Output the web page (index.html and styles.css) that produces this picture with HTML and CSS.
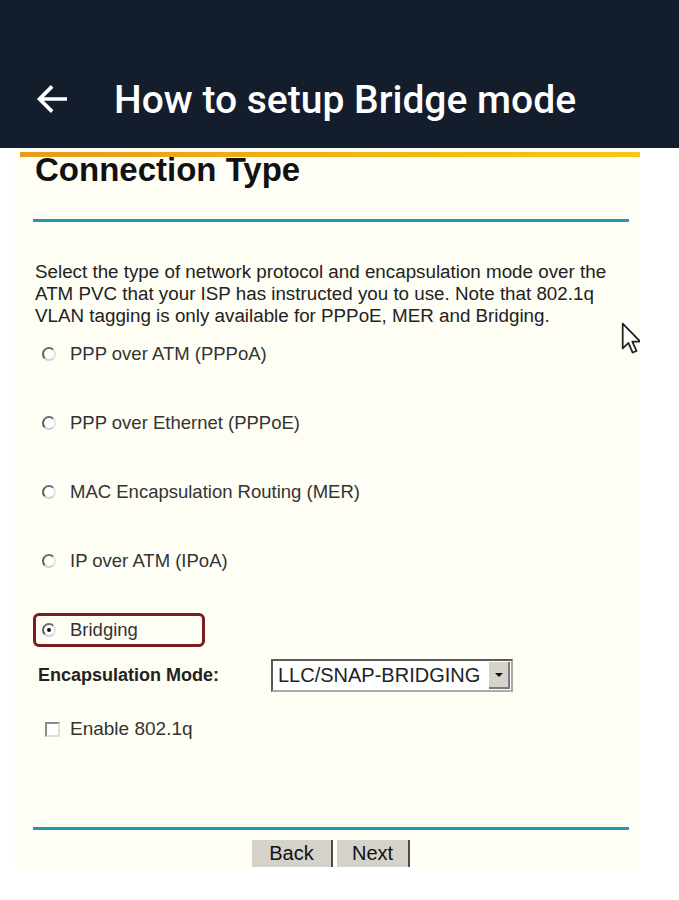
FILE: index.html
```html
<!DOCTYPE html>
<html lang="en">
<head>
    <meta charset="UTF-8">
    <meta name="viewport" content="width=device-width, initial-scale=1.0">
    <title>How to setup Bridge mode</title>
    <link rel="stylesheet" href="styles.css">
</head>
<body>
    <header class="appbar">
        <svg class="back-icon" viewBox="0 0 24 24" width="42" height="42">
            <path d="M20 12H4.5M11.5 4.8L4.3 12l7.2 7.2" fill="none" stroke="#fff" stroke-width="2.1"/>
        </svg>
        <h1 class="appbar-title">How to setup Bridge mode</h1>
    </header>

    <div class="shot">
        <div class="accent"></div>
        <h2 class="shot-title">Connection Type</h2>
        <div class="rule"></div>

        <p class="intro">Select the type of network protocol and encapsulation mode over the ATM PVC that your ISP has instructed you to use. Note that 802.1q VLAN tagging is only available for PPPoE, MER and Bridging.</p>

        <!-- Protocol choices -->
        <div class="options">
            <label class="option"><input type="radio" name="proto" class="radio"> PPP over ATM (PPPoA)</label>
            <label class="option"><input type="radio" name="proto" class="radio"> PPP over Ethernet (PPPoE)</label>
            <label class="option"><input type="radio" name="proto" class="radio"> MAC Encapsulation Routing (MER)</label>
            <label class="option"><input type="radio" name="proto" class="radio"> IP over ATM (IPoA)</label>
            <label class="option highlight"><input type="radio" name="proto" class="radio" checked> Bridging</label>
        </div>

        <div class="encap">
            <span class="encap-label">Encapsulation Mode:</span>
            <div class="select">
                <span class="select-value">LLC/SNAP-BRIDGING</span>
                <span class="select-btn"><span class="caret"></span></span>
            </div>
        </div>

        <label class="check-row"><input type="checkbox" class="checkbox"> Enable 802.1q</label>

        <div class="rule rule-bottom"></div>

        <div class="buttons">
            <button class="btn">Back</button>
            <button class="btn">Next</button>
        </div>

        <!-- mouse pointer captured in the screenshot -->
        <svg class="pointer" viewBox="0 0 13 20" width="21" height="32">
            <path d="M1 1v15.5l3.6-3.4 2.6 6 2.4-1-2.6-5.8h5z" fill="#fff" stroke="#222" stroke-width="1.1" stroke-linejoin="round"/>
        </svg>
    </div>
</body>
</html>
```

FILE: styles.css
```css
body {
    margin: 0;
    background: #fff;
    font-family: "Liberation Sans", Arial, sans-serif;
}

.appbar {
    height: 148px;
    background: #141d2c;
    display: flex;
    align-items: flex-end;
    padding: 0 0 25px 32px;
    box-sizing: border-box;
}

.back-icon {
    display: block;
    margin-bottom: 3px;
}

.appbar-title {
    margin: 0 0 0 40px;
    font-family: Roboto, "Noto Sans", sans-serif;
    font-weight: 500;
    font-size: 39px;
    line-height: 46px;
    color: #fff;
}

.shot {
    position: relative;
    width: 625px;
    height: 719px;
    margin-left: 15px;
    padding-left: 18px;
    box-sizing: border-box;
    background: #fefef5;
    overflow: hidden;
}

.accent {
    height: 5px;
    margin: 4px 0 0 -13px;
    width: 622px;
    background: linear-gradient(90deg, #e79a1e 0%, #f0b414 50%, #f6c812 100%);
}

.shot-title {
    margin: -1px 0 0 2px;
    font-size: 33px;
    line-height: 28px;
    color: #111;
}

.rule {
    height: 3px;
    width: 596px;
    margin-top: 35px;
    background: #2596b6;
}

.intro {
    margin: 39px 0 0 2px;
    width: 600px;
    font-size: 18.8px;
    line-height: 22px;
    color: #222;
}

.options {
    display: flex;
    flex-direction: column;
    gap: 35px;
    margin-top: 10px;
}

.option {
    display: flex;
    align-items: center;
    gap: 14px;
    width: 172px;
    height: 34px;
    padding-left: 6px;
    border: 3px solid transparent;
    border-radius: 6px;
    box-sizing: border-box;
    font-size: 18.5px;
    color: #333;
    white-space: nowrap;
}

.option.highlight {
    border-color: #7a1c1f;
}

.radio {
    appearance: none;
    margin: 0;
    width: 14px;
    height: 14px;
    border-radius: 50%;
    border: 2px solid;
    border-color: #6e6e6e #e4e4e4 #d2d2d2 #5e5e5e;
    background: #fff;
    box-sizing: border-box;
    position: relative;
    flex-shrink: 0;
}

.radio:checked::after {
    content: "";
    position: absolute;
    left: 3px;
    top: 3px;
    width: 4px;
    height: 4px;
    border-radius: 50%;
    background: #111;
}

.encap {
    display: flex;
    align-items: center;
    margin-top: 12px;
    height: 33px;
}

.encap-label {
    width: 233px;
    padding-left: 5px;
    font-size: 18px;
    font-weight: bold;
    color: #222;
}

.select {
    display: flex;
    align-items: center;
    width: 242px;
    height: 33px;
    border: 2px solid #5a5a5a;
    border-right-color: #aaa;
    border-bottom-color: #aaa;
    background: #fff;
    box-sizing: border-box;
}

.select-value {
    flex: 1;
    padding-left: 5px;
    font-size: 20px;
    color: #222;
}

.select-btn {
    display: flex;
    align-items: center;
    justify-content: center;
    width: 21px;
    height: 27px;
    margin-right: 1px;
    background: #d6d3cb;
    border-right: 2px solid #7a7a7a;
    border-bottom: 2px solid #7a7a7a;
    box-sizing: border-box;
}

.caret {
    border-left: 4px solid transparent;
    border-right: 4px solid transparent;
    border-top: 4px solid #111;
}

.check-row {
    display: flex;
    align-items: center;
    gap: 10px;
    height: 26px;
    margin-top: 24px;
    padding-left: 12px;
    font-size: 19px;
    color: #333;
}

.checkbox {
    appearance: none;
    margin: 0;
    width: 15px;
    height: 15px;
    border: 2px solid;
    border-color: #8a8a8a #ddd #ddd #8a8a8a;
    background: #fff;
    box-sizing: border-box;
}

.rule-bottom {
    margin-top: 85px;
}

.buttons {
    display: flex;
    gap: 4px;
    margin: 10px 0 0 219px;
}

.btn {
    width: 81px;
    height: 27px;
    padding: 0;
    border: none;
    border-right: 2px solid #4a4a4a;
    background: #d5d2cb;
    font-family: "Liberation Sans", Arial, sans-serif;
    font-size: 20px;
    line-height: 27px;
    color: #111;
}

.btn + .btn {
    width: 73px;
}

.pointer {
    position: absolute;
    left: 606px;
    top: 174px;
}
```
